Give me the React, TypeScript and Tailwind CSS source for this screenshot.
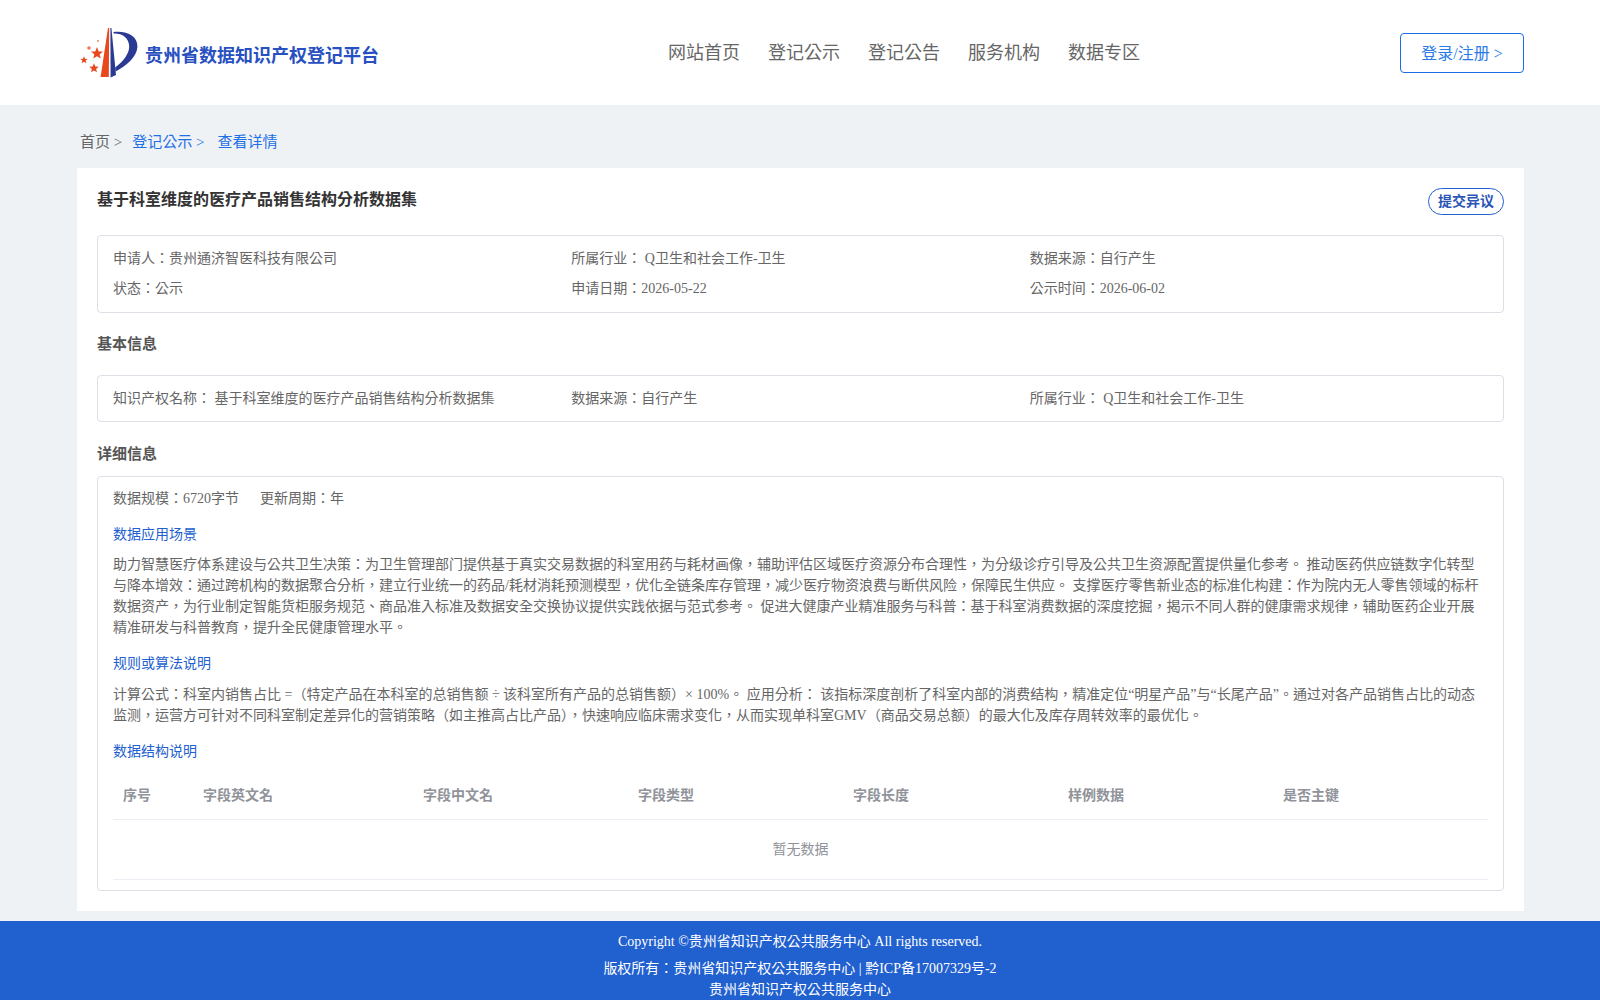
import React from "react";

const cols = ["序号", "字段英文名", "字段中文名", "字段类型", "字段长度", "样例数据", "是否主键"];
const widths = ["w-[80px]", "w-[220px]", "w-[215px]", "w-[215px]", "w-[215px]", "w-[215px]", "w-[215px]"];

function Logo() {
  return (
    <svg viewBox="79 27 62 54" className="w-[62px] h-[54px] shrink-0" aria-hidden="true">
      <polygon points="108,28 109.2,28 108.8,77 100.6,77" fill="#e8481c" />
      <polygon points="110.4,28 111.4,28 116,75 110.6,77.5" fill="#2a3a92" />
      <path d="M113.5,32 C127,30.5 138,36 137.4,47 C136.8,57 126,66 115.6,71.5 L115.2,67.5 C122.5,62 129.5,54 129.2,46 C128.8,37.5 122,33 113.6,33.4 Z" fill="#2a3a92" />
      <polygon points="97,47 98.7,51.4 103,51.6 99.6,54.4 100.8,58.6 97,56.2 93.2,58.6 94.4,54.4 91,51.6 95.3,51.4" fill="#e8481c" />
      <polygon points="84,56.2 85,58.8 87.8,58.9 85.6,60.6 86.4,63.3 84,61.8 81.6,63.3 82.4,60.6 80.2,58.9 83,58.8" fill="#e8481c" />
      <polygon points="94,63.2 95.3,66.5 98.8,66.7 96.1,68.9 97,72.3 94,70.4 91,72.3 91.9,68.9 89.2,66.7 92.7,66.5" fill="#e8481c" />
      <circle cx="89" cy="48" r="1.8" fill="#ee7a55" />
      <circle cx="98" cy="41" r="1" fill="#ee8a66" />
    </svg>
  );
}

export default function App() {
  return (
    <div className="bg-[#eff2f5] text-[14px] text-[#666666] font-['Liberation_Serif','Noto_Sans_CJK_TC',serif]">
      <header className="h-[105px] bg-white flex items-start pl-[79px] pr-[76px]">
        <div className="w-[589px] flex items-center h-[54px] mt-[27px] shrink-0">
          <Logo />
          <span className="ml-[4px] mt-[5px] text-[18px] font-bold text-[#2850c0]">贵州省数据知识产权登记平台</span>
        </div>
        <nav className="flex gap-[28px] text-[18px] leading-[26px] mt-[40px] text-[#666666]">
          <span>网站首页</span>
          <span>登记公示</span>
          <span>登记公告</span>
          <span>服务机构</span>
          <span>数据专区</span>
        </nav>
        <button className="ml-auto mt-[33px] w-[124px] h-[40px] pt-[2px] border border-[#1a6fe8] rounded text-[16px] text-[#2a7be8] bg-white">登录/注册 &gt;</button>
      </header>

      <main className="pl-[77px] pr-[76px] pb-[10px]">
        <div className="h-[63px] flex items-center pl-[3px] pt-[12px] text-[15px]">
          <span>首页 &gt;</span>
          <span className="ml-[10px] text-[#1f6fe5]">登记公示 &gt;</span>
          <span className="ml-[13px] text-[#1f6fe5]">查看详情</span>
        </div>

        <section className="bg-white px-[20px] pt-[20px] pb-[20px]">
          <div className="flex justify-between items-start h-[47px]">
            <h1 className="text-[16px] font-bold leading-[24px] text-[#333333]">基于科室维度的医疗产品销售结构分析数据集</h1>
            <button className="w-[76px] h-[27px] border border-[#2160cf] rounded-[14px] text-[14px] font-bold text-[#2a55b5] bg-white">提交异议</button>
          </div>

          <div className="border border-[#dcdfe6] rounded px-[15px] py-[8px] grid grid-cols-3">
            <div className="leading-[30px]">申请人：贵州通济智医科技有限公司</div>
            <div className="leading-[30px]">所属行业： Q卫生和社会工作-卫生</div>
            <div className="leading-[30px]">数据来源：自行产生</div>
            <div className="leading-[30px]">状态：公示</div>
            <div className="leading-[30px]">申请日期：2026-05-22</div>
            <div className="leading-[30px]">公示时间：2026-06-02</div>
          </div>

          <h2 className="font-bold text-[15px] text-[#555555] leading-[62px]">基本信息</h2>

          <div className="border border-[#dcdfe6] rounded px-[15px] py-[8px] grid grid-cols-3">
            <div className="leading-[29px]">知识产权名称： 基于科室维度的医疗产品销售结构分析数据集</div>
            <div className="leading-[29px]">数据来源：自行产生</div>
            <div className="leading-[29px]">所属行业： Q卫生和社会工作-卫生</div>
          </div>

          <h2 className="font-bold text-[15px] text-[#555555] leading-[22px] pt-[21px] pb-[11px]">详细信息</h2>

          <div className="border border-[#dcdfe6] rounded px-[15px] pt-[12px] pb-[10px]">
            <div className="flex gap-[21px] leading-[20px]">
              <span>数据规模：6720字节</span>
              <span>更新周期：年</span>
            </div>
            <h3 className="text-[#2160cf] leading-[20px] mt-[16px]">数据应用场景</h3>
            <p className="leading-[21px] mt-[9px]">
              助力智慧医疗体系建设与公共卫生决策：为卫生管理部门提供基于真实交易数据的科室用药与耗材画像，辅助评估区域医疗资源分布合理性，为分级诊疗引导及公共卫生资源配置提供量化参考。 推动医药供应链数字化转型与降本增效：通过跨机构的数据聚合分析，建立行业统一的药品/耗材消耗预测模型，优化全链条库存管理，减少医疗物资浪费与断供风险，保障民生供应。 支撑医疗零售新业态的标准化构建：作为院内无人零售领域的标杆数据资产，为行业制定智能货柜服务规范、商品准入标准及数据安全交换协议提供实践依据与范式参考。 促进大健康产业精准服务与科普：基于科室消费数据的深度挖掘，揭示不同人群的健康需求规律，辅助医药企业开展精准研发与科普教育，提升全民健康管理水平。
            </p>
            <h3 className="text-[#2160cf] leading-[20px] mt-[16px]">规则或算法说明</h3>
            <p className="leading-[21px] mt-[10px]">
              计算公式：科室内销售占比 =（特定产品在本科室的总销售额 ÷ 该科室所有产品的总销售额）× 100%。 应用分析： 该指标深度剖析了科室内部的消费结构，精准定位“明星产品”与“长尾产品”。通过对各产品销售占比的动态监测，运营方可针对不同科室制定差异化的营销策略（如主推高占比产品），快速响应临床需求变化，从而实现单科室GMV（商品交易总额）的最大化及库存周转效率的最优化。
            </p>
            <h3 className="text-[#2160cf] leading-[20px] mt-[16px]">数据结构说明</h3>
            <div className="mt-[10px]">
              <div className="flex h-[48px] items-center border-b border-[#ebeef5] font-bold text-[#909399]">
                {cols.map((c, i) => (
                  <div key={c} className={`${widths[i]} px-[10px]`}>{c}</div>
                ))}
              </div>
              <div className="h-[60px] flex items-center justify-center border-b border-[#ebeef5] text-[#909399]">暂无数据</div>
            </div>
          </div>
        </section>
      </main>

      <footer className="bg-[#2160cf] text-white text-center pt-[10px] pb-[4px]">
        <div className="leading-[22px]">Copyright ©贵州省知识产权公共服务中心 All rights reserved.</div>
        <div className="leading-[21px] mt-[5px]">版权所有：贵州省知识产权公共服务中心 | 黔ICP备17007329号-2</div>
        <div className="leading-[21px]">贵州省知识产权公共服务中心</div>
      </footer>
    </div>
  );
}
